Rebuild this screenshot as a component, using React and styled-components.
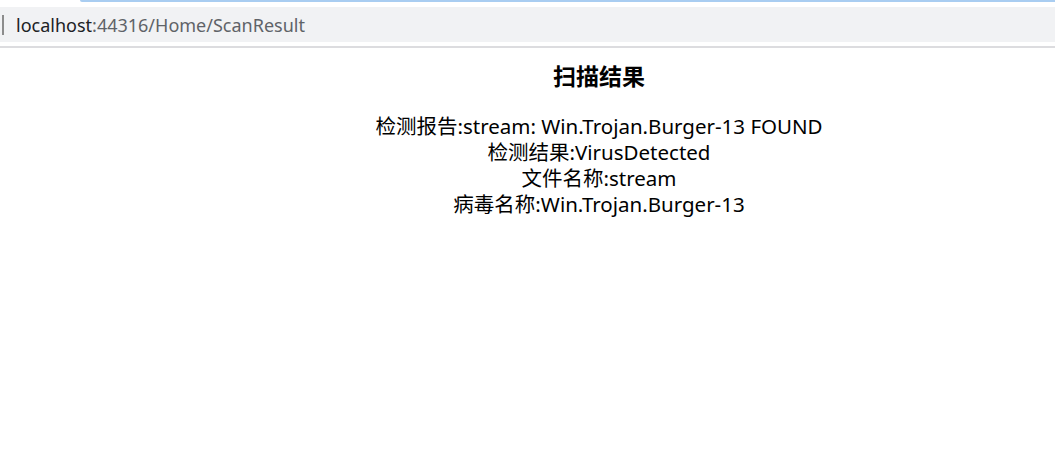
import React from "react";
import styled, { createGlobalStyle } from "styled-components";

const GlobalStyle = createGlobalStyle`
  html, body {
    margin: 0;
    padding: 0;
    background: #ffffff;
  }
  body {
    font-family: "Noto Sans", "Noto Sans CJK SC", sans-serif;
    color: #000000;
  }
`;

const report = [
  { label: "检测报告", value: "stream: Win.Trojan.Burger-13 FOUND" },
  { label: "检测结果", value: "VirusDetected" },
  { label: "文件名称", value: "stream" },
  { label: "病毒名称", value: "Win.Trojan.Burger-13" },
];

const App = () => {
  return (
    <>
      <GlobalStyle />
      <Chrome>
        <TabLine>
          <TabGlow />
        </TabLine>
        <AddressBar>
          <Caret />
          <Url>
            <Host>localhost</Host>
            <Path>:44316/Home/ScanResult</Path>
          </Url>
        </AddressBar>
        <Divider />
      </Chrome>
      <Page>
        <Title>扫描结果</Title>
        <Lines>
          {report.map((row) => (
            <Line key={row.label}>
              {row.label}:{row.value}
            </Line>
          ))}
        </Lines>
      </Page>
    </>
  );
};

export default App;

const Chrome = styled.div`
  display: flex;
  flex-direction: column;
  background: #ffffff;
`;

const TabLine = styled.div`
  height: 7px;
  display: flex;
  padding-left: 80px;
`;

const TabGlow = styled.div`
  flex: 1;
  height: 2px;
  background: #a9cdf1;
  border-radius: 0 0 0 2px;
`;

const AddressBar = styled.div`
  height: 35px;
  background: #f1f2f4;
  display: flex;
  align-items: center;
  padding-left: 2px;
`;

const Caret = styled.div`
  width: 2px;
  height: 20px;
  background: #8c8c8c;
  margin-right: 12px;
`;

const Url = styled.div`
  font-family: "Noto Sans", "Noto Sans CJK SC", sans-serif;
  font-size: 18px;
`;

const Host = styled.span`
  color: #202124;
`;

const Path = styled.span`
  color: #5f6368;
`;

const Divider = styled.div`
  margin-top: 4px;
  height: 2px;
  background: #dcdcdf;
`;

const Page = styled.div`
  padding-left: 143px;
  padding-top: 13px;
  text-align: center;
`;

const Title = styled.h3`
  margin: 0;
  font-size: 23px;
  line-height: 30px;
  font-weight: bold;
  font-family: "Noto Sans", "Noto Sans CJK SC", sans-serif;
`;

const Lines = styled.div`
  margin-top: 22px;
  display: flex;
  flex-direction: column;
`;

const Line = styled.div`
  font-size: 20.5px;
  line-height: 26px;
`;
